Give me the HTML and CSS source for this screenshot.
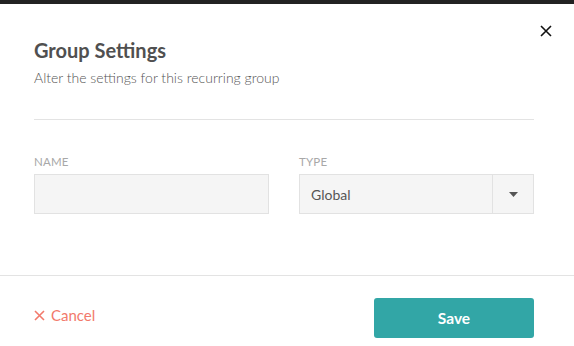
FILE: index.html
```html
<!DOCTYPE html>
<html>
<head>
<meta charset="utf-8">
<link rel="stylesheet" href="styles.css">
</head>
<body>
<div class="topbar"></div>
<div class="modal">
  <button class="close" aria-label="Close">
    <svg width="12" height="12" viewBox="0 0 12 12"><path d="M1 1L11 11M11 1L1 11" stroke="#111" stroke-width="1.6" fill="none"/></svg>
  </button>
  <div class="body">
    <h1 class="title">Group Settings</h1>
    <p class="subtitle">Alter the settings for this recurring group</p>
    <div class="divider"></div>
    <div class="fields">
      <div class="field">
        <label class="label">NAME</label>
        <div class="input"></div>
      </div>
      <div class="field">
        <label class="label">TYPE</label>
        <div class="select">
          <span class="select-value">Global</span>
          <span class="select-arrow"><svg width="9" height="5" viewBox="0 0 9 5"><path d="M0 0H9L4.5 5Z" fill="#555"/></svg></span>
        </div>
      </div>
    </div>
  </div>
  <div class="footer">
    <a class="cancel">
      <svg width="11" height="11" viewBox="0 0 11 11"><path d="M1 1L10 10M10 1L1 10" stroke="#f27a6c" stroke-width="1.6" fill="none"/></svg>
      Cancel
    </a>
    <button class="save">Save</button>
  </div>
</div>
</body>
</html>
```
FILE: styles.css
```css
html, body {
  margin: 0;
  padding: 0;
  background: #fff;
  font-family: Lato, "Open Sans", sans-serif;
}
.topbar {
  height: 4px;
  background: #222;
}
.modal {
  position: relative;
}
.close {
  position: absolute;
  top: 21px;
  right: 22px;
  border: 0;
  background: none;
  padding: 0;
  width: 12px;
  height: 12px;
  display: flex;
}
.body {
  padding: 34px 40px 0 34px;
}
.title {
  margin: 0;
  font-size: 20px;
  line-height: 24px;
  font-weight: 700;
  color: #505050;
}
.subtitle {
  margin: 8px 0 0;
  font-size: 14px;
  line-height: 16px;
  font-weight: 300;
  color: #555;
}
.divider {
  margin-top: 33px;
  height: 1px;
  background: #e3e3e3;
}
.fields {
  display: grid;
  grid-template-columns: 235px 235px;
  column-gap: 30px;
  padding-top: 35px;
  padding-bottom: 61px;
}
.field {
  display: flex;
  flex-direction: column;
  gap: 6px;
}
.label {
  font-size: 11.5px;
  line-height: 13px;
  color: #a8a8a8;
  letter-spacing: 0.2px;
}
.input, .select {
  box-sizing: border-box;
  height: 40px;
  border: 1px solid #e2e2e2;
  background: #f5f5f5;
}
.select {
  display: flex;
  align-items: stretch;
}
.select-value {
  flex: 1;
  display: flex;
  align-items: center;
  padding-left: 11px;
  font-size: 14px;
  color: #555;
}
.select-arrow {
  width: 40px;
  border-left: 1px solid #e2e2e2;
  display: flex;
  align-items: center;
  justify-content: center;
}
.footer {
  border-top: 1px solid #e3e3e3;
  display: flex;
  justify-content: space-between;
  align-items: center;
  padding: 22px 40px 0 34px;
}
.cancel {
  display: flex;
  align-items: center;
  gap: 6px;
  font-size: 15px;
  color: #f27a6c;
  margin-top: -6px;
}
.save {
  width: 160px;
  height: 40px;
  border: 0;
  border-radius: 3px;
  background: #32a6a6;
  color: #fff;
  font-family: Lato, sans-serif;
  font-weight: 700;
  font-size: 15.5px;
}
```
